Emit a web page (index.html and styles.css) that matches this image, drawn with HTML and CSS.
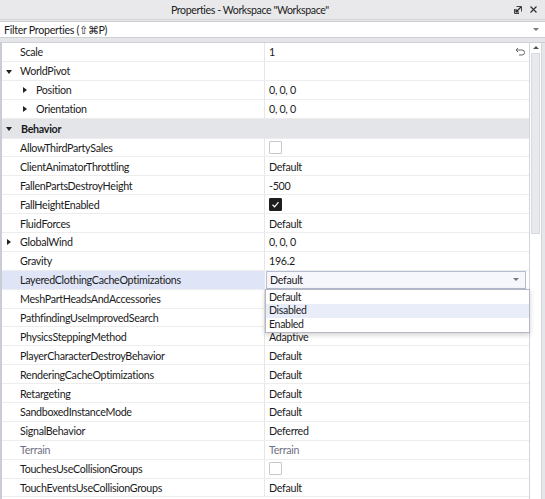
FILE: index.html
```html
<!DOCTYPE html>
<html lang="en">
<head>
    <meta charset="UTF-8">
    <title>Properties - Workspace</title>
    <link rel="stylesheet" href="styles.css">
</head>
<body>
    <div class="panel">
        <div class="titlebar">
            <span class="title">Properties - Workspace "Workspace"</span>
            <span class="title-icons">
                <svg width="10" height="10" viewBox="0 0 10 10">
                    <path d="M3.5 1.5 H8.5 V6.5" fill="none" stroke="#444" stroke-width="1"/>
                    <path d="M1.5 4 V8.5 H6" fill="none" stroke="#444" stroke-width="1"/>
                    <path d="M8 2 L3 7 M3 4 V7 H6" fill="none" stroke="#222" stroke-width="1.2"/>
                </svg>
                <svg width="9" height="9" viewBox="0 0 9 9">
                    <path d="M1.5 1.5 L7.5 7.5 M7.5 1.5 L1.5 7.5" stroke="#333" stroke-width="1.2"/>
                </svg>
            </span>
        </div>

        <div class="filter">
            <span>Filter Properties (⇧⌘P)</span>
            <span class="caret"></span>
        </div>

        <div class="body">
            <div class="rows">
                <div class="row">
                    <div class="name">Scale</div>
                    <div class="value">1
                        <svg class="revert" width="11" height="9" viewBox="0 0 11 9">
                            <path d="M3 1 L1 3 L3 5 M1 3 H7 A2.5 2.5 0 0 1 7 8 H4" fill="none" stroke="#666" stroke-width="1"/>
                        </svg>
                    </div>
                </div>
                <div class="row">
                    <div class="name"><span class="arrow down"></span>WorldPivot</div>
                    <div class="value"></div>
                </div>
                <div class="row">
                    <div class="name sub"><span class="arrow right"></span>Position</div>
                    <div class="value">0, 0, 0</div>
                </div>
                <div class="row">
                    <div class="name sub"><span class="arrow right"></span>Orientation</div>
                    <div class="value">0, 0, 0</div>
                </div>
                <div class="row group">
                    <div class="name"><span class="arrow down"></span>Behavior</div>
                </div>
                <div class="row">
                    <div class="name">AllowThirdPartySales</div>
                    <div class="value"><span class="check"></span></div>
                </div>
                <div class="row">
                    <div class="name">ClientAnimatorThrottling</div>
                    <div class="value">Default</div>
                </div>
                <div class="row">
                    <div class="name">FallenPartsDestroyHeight</div>
                    <div class="value">-500</div>
                </div>
                <div class="row">
                    <div class="name">FallHeightEnabled</div>
                    <div class="value">
                        <span class="check on">
                            <svg width="9" height="9" viewBox="0 0 9 9">
                                <path d="M1.5 4.8 L3.6 6.8 L7.5 2.2" fill="none" stroke="#fff" stroke-width="1.2"/>
                            </svg>
                        </span>
                    </div>
                </div>
                <div class="row">
                    <div class="name">FluidForces</div>
                    <div class="value">Default</div>
                </div>
                <div class="row">
                    <div class="name"><span class="arrow right"></span>GlobalWind</div>
                    <div class="value">0, 0, 0</div>
                </div>
                <div class="row">
                    <div class="name">Gravity</div>
                    <div class="value">196.2</div>
                </div>
                <div class="row selected">
                    <div class="name">LayeredClothingCacheOptimizations</div>
                    <div class="value">
                        <div class="select">Default<span class="caret"></span></div>
                        <ul class="menu">
                            <li>Default</li>
                            <li class="hover">Disabled</li>
                            <li>Enabled</li>
                        </ul>
                    </div>
                </div>
                <!-- values of the next two rows sit under the open menu -->
                <div class="row">
                    <div class="name">MeshPartHeadsAndAccessories</div>
                    <div class="value"></div>
                </div>
                <div class="row">
                    <div class="name">PathfindingUseImprovedSearch</div>
                    <div class="value"></div>
                </div>
                <div class="row">
                    <div class="name">PhysicsSteppingMethod</div>
                    <div class="value">Adaptive</div>
                </div>
                <div class="row">
                    <div class="name">PlayerCharacterDestroyBehavior</div>
                    <div class="value">Default</div>
                </div>
                <div class="row">
                    <div class="name">RenderingCacheOptimizations</div>
                    <div class="value">Default</div>
                </div>
                <div class="row">
                    <div class="name">Retargeting</div>
                    <div class="value">Default</div>
                </div>
                <div class="row">
                    <div class="name">SandboxedInstanceMode</div>
                    <div class="value">Default</div>
                </div>
                <div class="row">
                    <div class="name">SignalBehavior</div>
                    <div class="value">Deferred</div>
                </div>
                <div class="row readonly">
                    <div class="name">Terrain</div>
                    <div class="value">Terrain</div>
                </div>
                <div class="row">
                    <div class="name">TouchesUseCollisionGroups</div>
                    <div class="value"><span class="check"></span></div>
                </div>
                <div class="row">
                    <div class="name">TouchEventsUseCollisionGroups</div>
                    <div class="value">Default</div>
                </div>
            </div>

            <div class="scrollbar">
                <div class="scroll-up"></div>
                <div class="thumb"></div>
            </div>
        </div>
    </div>
</body>
</html>
```

FILE: styles.css
```css
* {
    margin: 0;
    padding: 0;
    box-sizing: border-box;
}

body {
    font-family: 'Lato', 'Noto Sans', sans-serif;
    font-size: 10.7px;
    letter-spacing: -0.3px;
    color: #1b1b1b;
    background: #fff;
}

.panel {
    width: 545px;
    height: 499px;
    background: #e5e6e9;
    overflow: hidden;
    display: flex;
    flex-direction: column;
}

/* window title */
.titlebar {
    height: 20px;
    display: flex;
    align-items: center;
    background: #e9e9eb;
    border-bottom: 1px solid #d6d6d8;
}

.title {
    flex: 1;
    padding-left: 171px;
    font-size: 10.6px;
    letter-spacing: -0.4px;
    color: #222;
}

.title-icons {
    display: flex;
    align-items: center;
    gap: 6px;
    padding-right: 7px;
}

/* filter box */
.filter {
    height: 17px;
    margin-top: 1px;
    background: #fff;
    border-top: 1px solid #cfcfd1;
    border-bottom: 1px solid #cfcfd1;
    display: flex;
    align-items: center;
    justify-content: space-between;
    padding: 0 6px 0 4px;
}

.caret {
    width: 0;
    height: 0;
    border-left: 3px solid transparent;
    border-right: 3px solid transparent;
    border-top: 3px solid #777;
}

/* property grid */
.body {
    flex: 1;
    margin-top: 4px;
    display: flex;
    border-left: 2px solid #c9ccd4;
    border-top: 1px solid #cfd1d6;
    min-height: 0;
}

.rows {
    width: 528px;
    background: #fff;
    border-right: 1px solid #d3d5da;
}

.row {
    display: flex;
    height: 18.9px;
    border-bottom: 1px solid #ededee;
}

.name {
    width: 263px;
    flex-shrink: 0;
    display: flex;
    align-items: center;
    padding-left: 18px;
    border-right: 1px solid #e6e6e8;
    position: relative;
}

.name.sub {
    padding-left: 34px;
}

.value {
    flex: 1;
    display: flex;
    align-items: center;
    padding-left: 4px;
    position: relative;
}

.revert {
    margin-left: auto;
    margin-right: 3px;
}

.arrow {
    position: absolute;
    width: 0;
    height: 0;
}

.arrow.down {
    left: 4px;
    top: 8px;
    border-left: 3px solid transparent;
    border-right: 3px solid transparent;
    border-top: 4px solid #222;
}

.arrow.right {
    left: 5px;
    top: 6px;
    border-top: 3px solid transparent;
    border-bottom: 3px solid transparent;
    border-left: 4px solid #222;
}

.name.sub .arrow.right {
    left: 21px;
}

.row.group {
    height: 20px;
    background: #e4e5e9;
    font-weight: bold;
}

.row.group .name {
    border-right: none;
    padding-left: 19px;
}

.row.readonly {
    color: #6e6f82;
}

.check {
    width: 13px;
    height: 13px;
    border: 1px solid #c8c8cc;
    border-radius: 1px;
    background: #fff;
    display: flex;
    align-items: center;
    justify-content: center;
}

.check.on {
    background: #1e1e1e;
    border-color: #1e1e1e;
}

/* selected row with open enum editor */
.row.selected .name {
    background: #dfe5f7;
}

.select {
    width: 100%;
    height: 18px;
    margin-left: -3px;
    padding-left: 3px;
    padding-right: 6px;
    border: 1px solid #b7bdd1;
    background: #f6f7fc;
    display: flex;
    align-items: center;
    justify-content: space-between;
}

.menu {
    list-style: none;
    position: absolute;
    left: 0;
    top: 18px;
    width: 265px;
    background: #fff;
    border: 1px solid #b5b8c4;
    box-shadow: 0 2px 5px rgba(0, 0, 0, 0.18);
    padding: 1px 0;
    z-index: 2;
}

.menu li {
    height: 13.5px;
    line-height: 13.5px;
    padding-left: 3px;
    font-size: 10.5px;
}

.menu li.hover {
    background: #e9edf9;
}

/* scrollbar */
.scrollbar {
    width: 12px;
    background: #fff;
    border-right: 1px solid #d3d5da;
    display: flex;
    flex-direction: column;
}

.scroll-up {
    height: 10px;
    position: relative;
}

.scroll-up::after {
    content: "";
    position: absolute;
    left: 3px;
    top: 3px;
    border-left: 3px solid transparent;
    border-right: 3px solid transparent;
    border-bottom: 3px solid #555;
}

.thumb {
    height: 181px;
    margin: 0 1px;
    background: #e8e9ec;
    border: 1px solid #d9dadf;
}
```
